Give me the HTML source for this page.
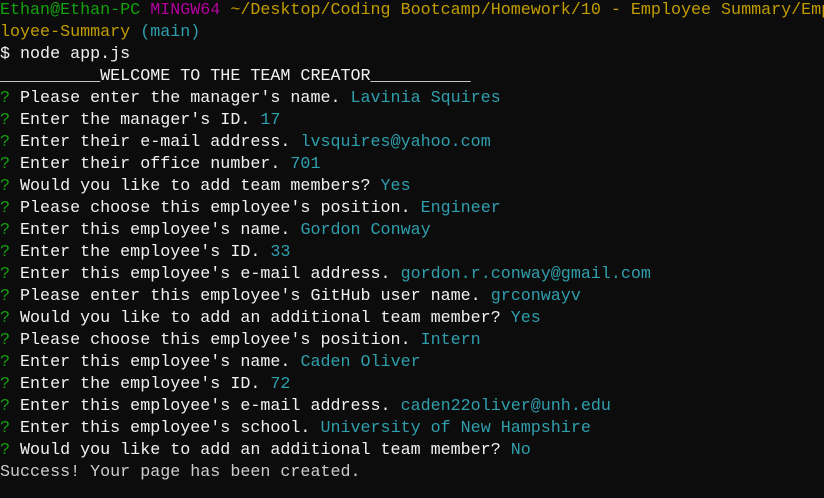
<!DOCTYPE html>
<html><head><meta charset="utf-8"><style>
html,body{margin:0;padding:0;background:#0c0c0c;width:824px;height:498px;overflow:hidden}
pre{margin:0;position:absolute;top:0;left:0;font-family:"Liberation Mono","DejaVu Sans Mono",monospace;font-size:16.7px;line-height:22px;color:#f2f2f2;white-space:pre}
.g{color:#13a10e}.m{color:#b4009e}.y{color:#c19c00}.c{color:#2f9fae}.w{color:#cccccc}
</style></head><body><pre><span class="g">Ethan@Ethan-PC</span> <span class="m">MINGW64</span> <span class="y">~/Desktop/Coding Bootcamp/Homework/10 - Employee Summary/Emp</span>
<span class="y">loyee-Summary</span> <span class="c">(main)</span>
$ node app.js
__________WELCOME TO THE TEAM CREATOR__________
<span class="g">?</span> Please enter the manager's name. <span class="c">Lavinia Squires</span>
<span class="g">?</span> Enter the manager's ID. <span class="c">17</span>
<span class="g">?</span> Enter their e-mail address. <span class="c">lvsquires@yahoo.com</span>
<span class="g">?</span> Enter their office number. <span class="c">701</span>
<span class="g">?</span> Would you like to add team members? <span class="c">Yes</span>
<span class="g">?</span> Please choose this employee's position. <span class="c">Engineer</span>
<span class="g">?</span> Enter this employee's name. <span class="c">Gordon Conway</span>
<span class="g">?</span> Enter the employee's ID. <span class="c">33</span>
<span class="g">?</span> Enter this employee's e-mail address. <span class="c">gordon.r.conway@gmail.com</span>
<span class="g">?</span> Please enter this employee's GitHub user name. <span class="c">grconwayv</span>
<span class="g">?</span> Would you like to add an additional team member? <span class="c">Yes</span>
<span class="g">?</span> Please choose this employee's position. <span class="c">Intern</span>
<span class="g">?</span> Enter this employee's name. <span class="c">Caden Oliver</span>
<span class="g">?</span> Enter the employee's ID. <span class="c">72</span>
<span class="g">?</span> Enter this employee's e-mail address. <span class="c">caden22oliver@unh.edu</span>
<span class="g">?</span> Enter this employee's school. <span class="c">University of New Hampshire</span>
<span class="g">?</span> Would you like to add an additional team member? <span class="c">No</span>
<span class="w">Success! Your page has been created.</span></pre></body></html>
